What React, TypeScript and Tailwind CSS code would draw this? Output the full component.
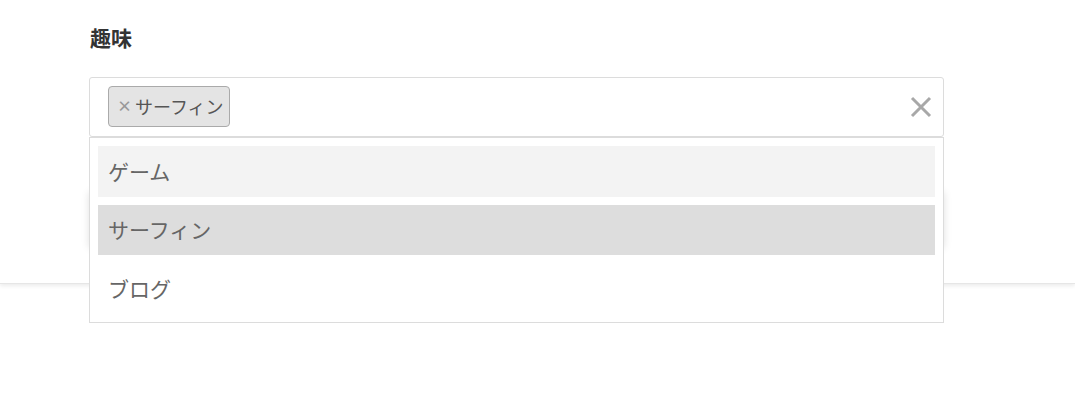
import { useState } from "react"

const options = ["ゲーム", "サーフィン", "ブログ"]

const App = () => {
  const [selected] = useState<string[]>(["サーフィン"])
  const hovered = "ゲーム"

  return (
    <main
      className="relative w-[1075px] h-[416px] bg-white overflow-hidden"
      style={{ fontFamily: '"Noto Sans CJK JP", "Noto Sans", sans-serif' }}
    >
      {/* panel behind the field */}
      <section className="h-[284px] bg-white shadow-[0_2px_4px_rgba(0,0,0,0.08)] border-b border-[#e6e6e6] pt-[22px] pl-[89px]">
        <h2 className="text-[21px] font-bold text-[#333] leading-[30px] pl-px">趣味</h2>
        <div className="mt-[25px] w-[855px] h-[60px] border border-[#dcdcdc] rounded-[3px] bg-white flex items-center pl-[18px] pr-[10px]">
          {selected.map((s) => (
            <span
              key={s}
              className="flex items-center h-[41px] mb-[1px] pl-[8px] pr-[5px] bg-[#e4e4e4] border border-[#aaa] rounded-[4px] text-[18px] text-[#555]"
            >
              <span className="text-[#999] text-[15px] font-bold mr-[3px]">×</span>
              {s}
            </span>
          ))}
          <div className="flex-1" />
          <svg width="22" height="22" viewBox="0 0 22 22" className="mr-[1px]">
            <path d="M2 2 L20 20 M20 2 L2 20" stroke="#a8a8a8" strokeWidth="3" fill="none" />
          </svg>
        </div>
        <div className="mt-[53px] w-[855px] h-[56px] bg-white shadow-[0_2px_8px_rgba(0,0,0,0.12)]" />
      </section>

      {/* dropdown */}
      <div className="absolute left-[89px] top-[137px] w-[855px] bg-white border border-[#dcdcdc] p-[8px] flex flex-col gap-[8px]">
        {options.map((o) => (
          <div
            key={o}
            className={`h-[50.5px] flex items-center pl-[10px] text-[21px] text-[#666] ${
              selected.includes(o) ? "bg-[#dddddd]" : o == hovered ? "bg-[#f3f3f3]" : "bg-white"
            }`}
          >
            {o}
          </div>
        ))}
      </div>
    </main>
  )
}

export default App
